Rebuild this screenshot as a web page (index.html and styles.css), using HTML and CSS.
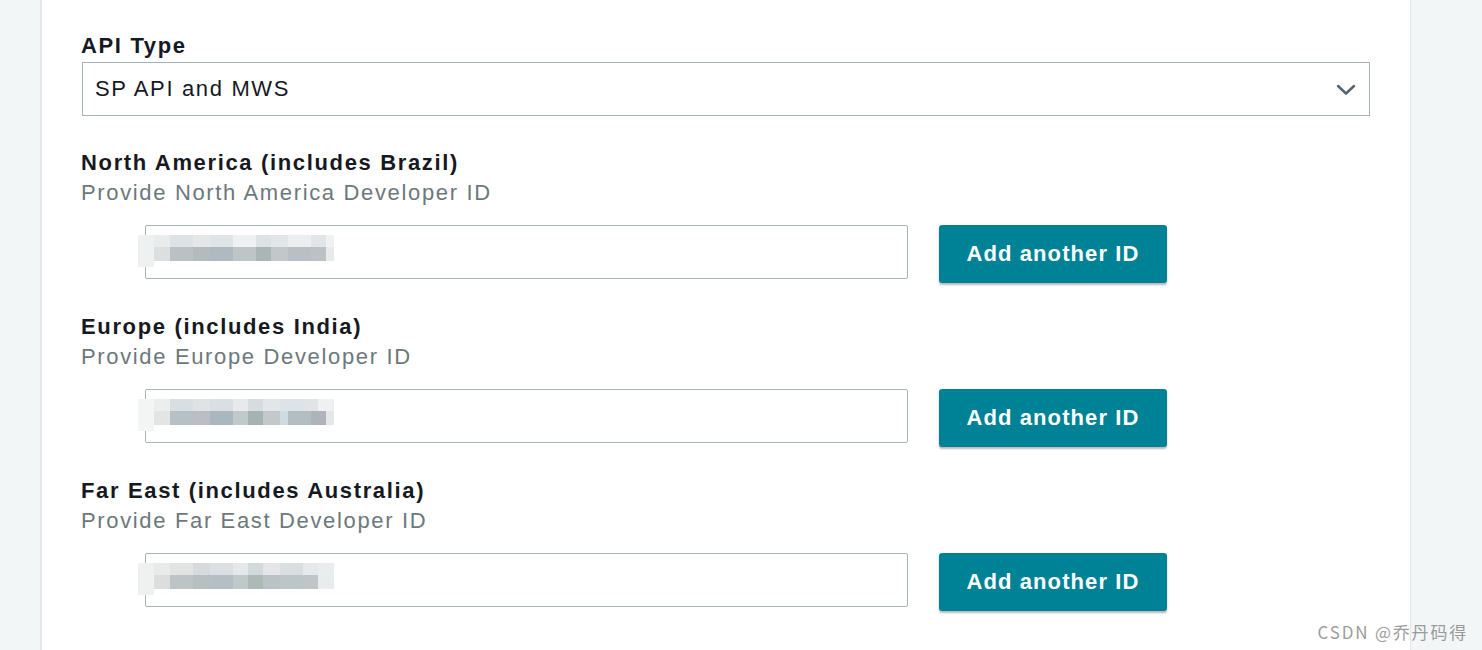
FILE: index.html
```html
<!DOCTYPE html>
<html lang="en">
<head>
<meta charset="utf-8">
<title>Developer IDs</title>
<link rel="stylesheet" href="styles.css">
</head>
<body>
<div class="page">
  <div class="side side-left"></div>
  <main class="panel">
    <div class="field-label api-label">API Type</div>
    <div class="select">
      <span class="select-value">SP API and MWS</span>
      <svg class="chevron" width="20" height="12" viewBox="0 0 20 12"><path d="M2 2 L10 9.5 L18 2" fill="none" stroke="#51646f" stroke-width="2.4" stroke-linecap="round" stroke-linejoin="round"/></svg>
    </div>

    <section class="region region-first">
      <div class="field-label">North America (includes Brazil)</div>
      <div class="field-help">Provide North America Developer ID</div>
      <div class="id-row">
        <div class="id-input">
          <div class="mosaic mosaic-a"><span class="m-edge"></span><span class="m-top"></span><span class="m-bottom"></span></div>
        </div>
        <button class="add-btn">Add another ID</button>
      </div>
    </section>

    <section class="region">
      <div class="field-label">Europe (includes India)</div>
      <div class="field-help">Provide Europe Developer ID</div>
      <div class="id-row">
        <div class="id-input">
          <div class="mosaic mosaic-b"><span class="m-edge"></span><span class="m-top"></span><span class="m-bottom"></span></div>
        </div>
        <button class="add-btn">Add another ID</button>
      </div>
    </section>

    <section class="region">
      <div class="field-label">Far East (includes Australia)</div>
      <div class="field-help">Provide Far East Developer ID</div>
      <div class="id-row">
        <div class="id-input">
          <div class="mosaic mosaic-c"><span class="m-edge"></span><span class="m-top"></span><span class="m-bottom"></span></div>
        </div>
        <button class="add-btn">Add another ID</button>
      </div>
    </section>
  </main>
  <div class="side side-right"></div>
</div>
<div class="watermark">CSDN @乔丹码得</div>
</body>
</html>
```

FILE: styles.css
```css
* { box-sizing: border-box; }

html, body {
  margin: 0;
  padding: 0;
  height: 100%;
  background: #ffffff;
  overflow: hidden;
}

body {
  font-family: "Liberation Sans", Arial, sans-serif;
  font-size: 22px;
  letter-spacing: 1.65px;
  color: #16191f;
}

.page {
  display: flex;
  height: 650px;
}

.side {
  background: #f2f6f7;
}

.side-left {
  width: 42px;
  border-right: 2px solid #e2e9ec;
}

.side-right {
  flex: 1;
  border-left: 1px solid #e2e9ec;
}

.panel {
  width: 1368px;
  background: #ffffff;
  padding: 34px 0 0 39px;
}

.field-label {
  font-weight: bold;
  line-height: 30px;
  color: #16191f;
}

.api-label {
  line-height: 24px;
}

.field-help {
  line-height: 30px;
  color: #6d787c;
}

.select {
  margin-top: 4px;
  margin-left: 1px;
  width: 1288px;
  height: 54px;
  border: 1px solid #a6b2b6;
  display: flex;
  align-items: center;
  justify-content: space-between;
  padding: 0 13px 0 12px;
}

.select-value {
  color: #16191f;
}

.chevron {
  margin-top: 2px;
}

.region {
  margin-top: 27px;
}

.region-first {
  margin-top: 32px;
}

.id-row {
  margin-top: 17px;
  display: flex;
  align-items: flex-start;
  gap: 31px;
  padding-left: 64px;
  height: 60px;
}

.id-input {
  position: relative;
  width: 763px;
  height: 54px;
  border: 1px solid #a9b3b6;
  border-radius: 2px;
  background: #fff;
}

.mosaic {
  position: absolute;
  left: -8px;
  top: 9px;
  width: 196px;
  height: 33px;
}

.mosaic span {
  position: absolute;
  display: block;
}

.m-edge {
  left: 0;
  top: 0;
  width: 16px;
  height: 32px;
  background: #eff1f1;
}

.m-top {
  left: 16px;
  top: 0;
  width: 180px;
  height: 12px;
}

.m-bottom {
  left: 16px;
  top: 12px;
  width: 180px;
  height: 14px;
}

.mosaic-a .m-top {
  background: linear-gradient(to right,
    #e9ecec 0 16px, #dde2e4 16px 39px, #e4e7e8 39px 56px, #dfe4e6 56px 79px,
    #eef1f1 79px 102px, #dde3e4 102px 117px, #e3e6e8 117px 134px,
    #eaeef0 134px 157px, #e2e5e7 157px 172px, #eef0f2 172px 180px);
}

.mosaic-a .m-bottom {
  background: linear-gradient(to right,
    #dcdfe0 0 16px, #b9c1c4 16px 39px, #b4bbbd 39px 56px, #aeb9c0 56px 79px,
    #bdc5c6 79px 102px, #aab5b4 102px 117px, #c2c7ca 117px 134px,
    #b8c0c5 134px 157px, #bcc2c4 157px 172px, #e8ebec 172px 180px);
}

.mosaic-b .m-edge { background: #f3f4f4; }

.mosaic-b .m-top {
  background: linear-gradient(to right,
    #eceeee 0 16px, #d8dee2 16px 39px, #e0e3e5 39px 56px, #dadfe4 56px 79px,
    #e7eaeb 79px 94px, #d6dcdf 94px 109px, #e3e6e8 109px 126px,
    #dde3e7 126px 149px, #e1e4e6 149px 164px, #eef0f2 164px 180px);
}

.mosaic-b .m-bottom {
  background: linear-gradient(to right,
    #e3e5e5 0 16px, #b6c0c7 16px 39px, #bcbdc5 39px 56px, #a9b8bf 56px 79px,
    #c0cacc 79px 94px, #a5b3b2 94px 109px, #c4c8ca 109px 126px,
    #cfdbe2 126px 134px, #b3bec3 134px 157px, #aeb4ba 157px 172px, #e4e7e9 172px 180px);
}

.mosaic-c .m-top {
  background: linear-gradient(to right,
    #e9ebeb 0 16px, #e2e4e4 16px 39px, #d7dadc 39px 56px, #d9dfe2 56px 79px,
    #e4e8ea 79px 94px, #d2d9dc 94px 109px, #e3e5e8 109px 126px,
    #d9dfe1 126px 149px, #e6e9eb 149px 164px, #eaedee 164px 180px);
}

.mosaic-c .m-bottom {
  background: linear-gradient(to right,
    #dcdede 0 16px, #bcc4c6 16px 39px, #b8bfc0 39px 56px, #b4bec4 56px 79px,
    #c0c9ca 79px 94px, #acb9b6 94px 109px, #bbc2c6 109px 126px,
    #bcc5c7 126px 149px, #c0c5c7 149px 164px, #e9ecec 164px 180px);
}

.add-btn {
  width: 228px;
  height: 58px;
  border: 0;
  border-radius: 3px;
  background: #008296;
  color: #ffffff;
  font-family: "Liberation Sans", Arial, sans-serif;
  font-size: 22px;
  font-weight: bold;
  letter-spacing: 1.1px;
  box-shadow: 0 2px 2px rgba(0, 0, 0, 0.28);
  padding: 0;
  cursor: pointer;
}

.watermark {
  position: absolute;
  right: 14px;
  bottom: 7px;
  font-family: "Noto Sans CJK SC", "Noto Sans", sans-serif;
  font-size: 17px;
  letter-spacing: 1.8px;
  color: rgba(130, 130, 130, 0.8);
  line-height: 22px;
}
```
